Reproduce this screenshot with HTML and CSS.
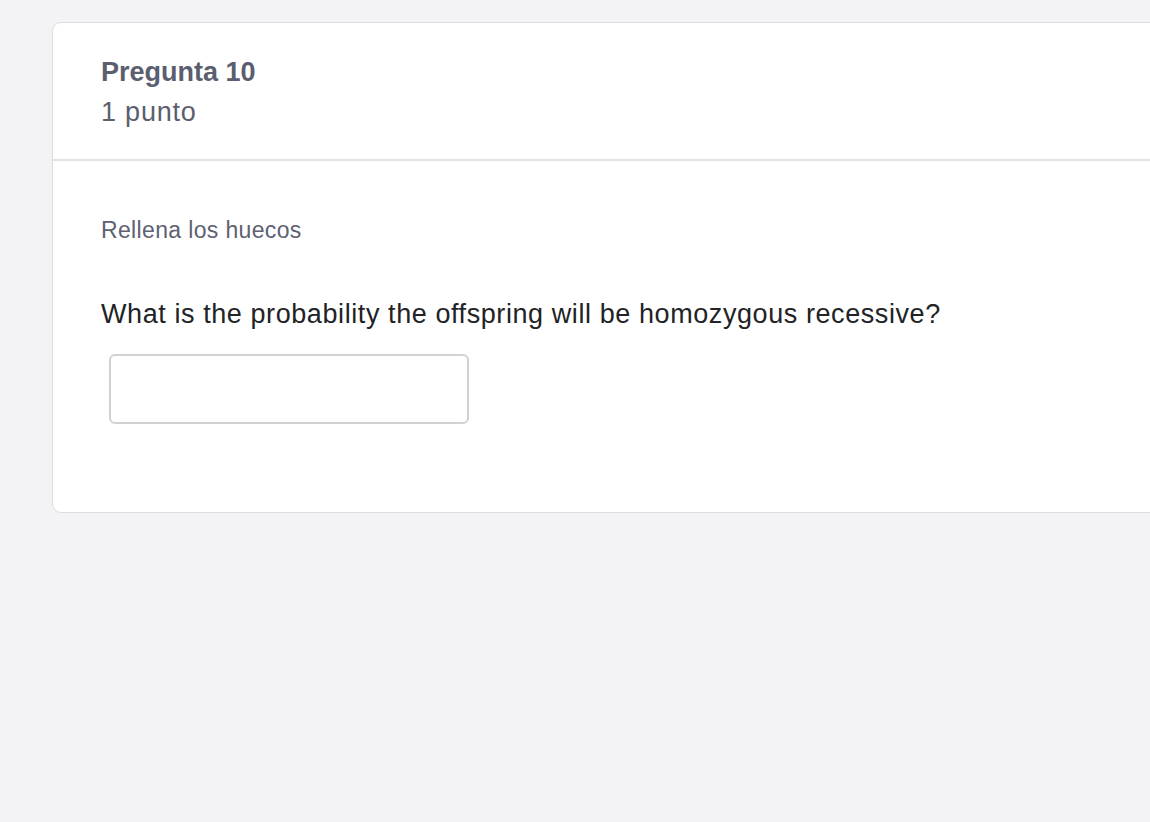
FILE: index.html
```html
<!DOCTYPE html>
<html lang="es">
<head>
<meta charset="utf-8">
<title>Pregunta 10</title>
<link rel="stylesheet" href="styles.css">
</head>
<body>
<div class="page">
  <section class="card">
    <header class="card-header">
      <div class="q-title">Pregunta 10</div>
      <div class="q-points">1 punto</div>
    </header>
    <div class="card-body">
      <div class="q-type">Rellena los huecos</div>
      <div class="q-text">What is the probability the offspring will be homozygous recessive?</div>
      <input class="blank" type="text" aria-label="Respuesta">
    </div>
  </section>
</div>
</body>
</html>
```
FILE: styles.css
```css
html, body {
  margin: 0;
  padding: 0;
  background: #f3f3f5;
  overflow: hidden;
  font-family: "Liberation Sans", Arial, sans-serif;
}
.page {
  padding: 22px 0 0 52px;
  width: 1300px;
}
.card {
  width: 1200px;
  background: #fff;
  border: 1px solid #dcdde1;
  border-radius: 9px;
  box-sizing: border-box;
}
.card-header {
  padding: 29px 48px 27px;
  border-bottom: 2px solid #e2e3e6;
  color: #5a5e6f;
  font-size: 27px;
  line-height: 40px;
}
.q-title {
  font-weight: bold;
}
.q-points {
  letter-spacing: 0.8px;
}
.card-body {
  padding: 54px 48px 88px;
}
.q-type {
  font-size: 23px;
  line-height: 30px;
  letter-spacing: 0.35px;
  color: #5d6172;
}
.q-text {
  margin-top: 54px;
  font-size: 27px;
  line-height: 30px;
  letter-spacing: 0.58px;
  color: #222326;
}
.blank {
  display: block;
  margin: 25px 0 0 8px;
  width: 360px;
  height: 70px;
  box-sizing: border-box;
  border: 2px solid #d0d1d4;
  border-radius: 6px;
  background: #fff;
  outline: none;
  font: inherit;
}
```
